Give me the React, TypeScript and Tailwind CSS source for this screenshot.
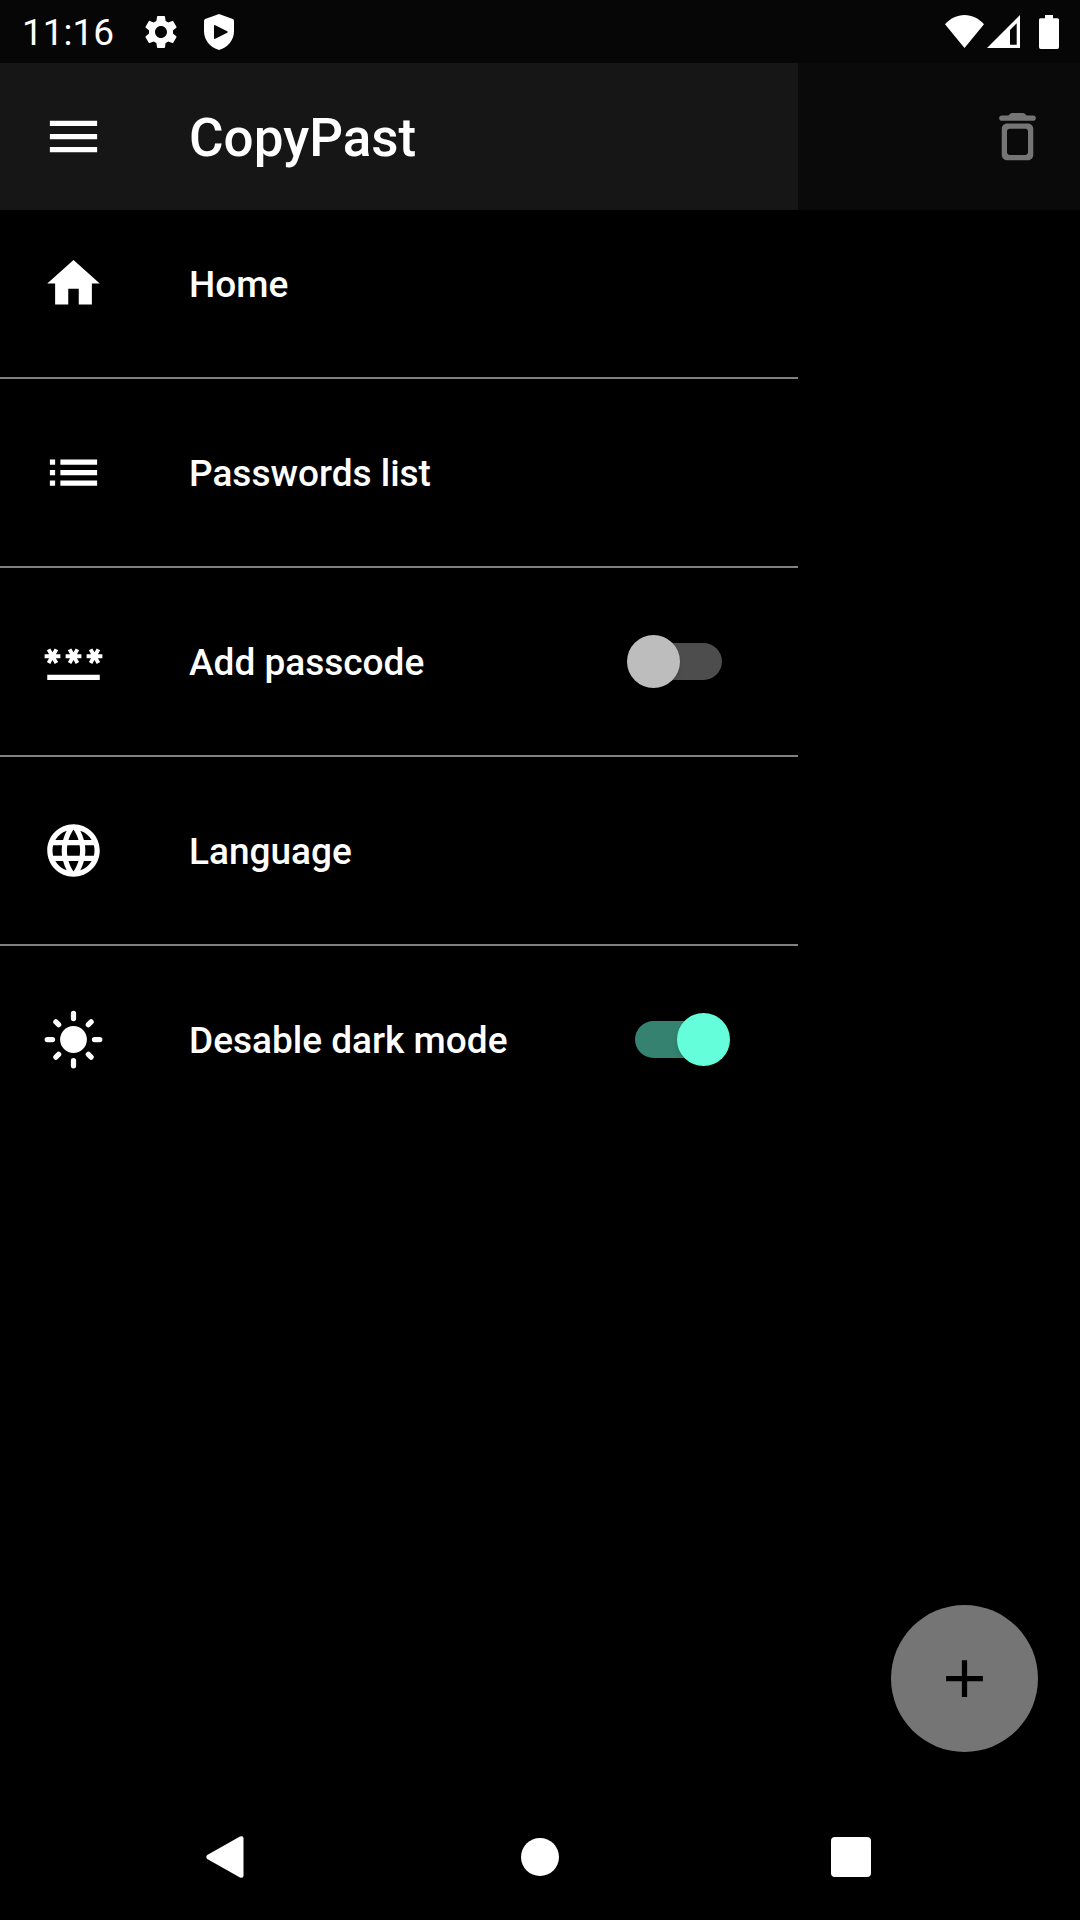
import { useState } from "react";
import type { ReactNode } from "react";
import { MdAdd, MdHome, MdLanguage, MdList, MdMenu, MdPassword, MdSettings } from "react-icons/md";

const ICON = "size-[63px] shrink-0";

function ShieldPlayIcon() {
  return (
    <svg viewBox="0 0 30 36" className="h-9 w-[30px]" fill="currentColor" aria-hidden="true">
      <path d="M15 0 L28.8 5 Q30 5.5 30 6.8 V17 C30 26 24 33.5 15 36 C6 33.5 0 26 0 17 V6.8 Q0 5.5 1.2 5 Z" />
      <path d="M10 11.8 Q10 10.6 11.2 11.2 L23.2 17.3 Q24.4 18 23.2 18.8 L11.2 24.8 Q10 25.4 10 24.2 Z" className="fill-[#060606]" />
    </svg>
  );
}

function WifiIcon() {
  return (
    <svg viewBox="0 0 39 33" className="h-[33px] w-[39px]" fill="currentColor" aria-hidden="true">
      <path d="M19.5 33 L0 9.3 C5 3.6 12 0 19.5 0 S34 3.6 39 9.3 Z" />
    </svg>
  );
}

function SignalIcon() {
  return (
    <svg viewBox="0 0 33 33" className="size-[33px]" fill="currentColor" aria-hidden="true">
      <path fillRule="evenodd" d="M33 0 V33 H0 Z M29.7 8.2 L23 15 V29.7 H29.7 Z" />
    </svg>
  );
}

function BatteryIcon() {
  return (
    <svg viewBox="0 0 20 34" className="h-[34px] w-5" fill="currentColor" aria-hidden="true">
      <path d="M6 0 H14 V3.3 H18.5 Q20 3.3 20 4.8 V32.3 Q20 34 18.3 34 H1.7 Q0 34 0 32.3 V4.8 Q0 3.3 1.5 3.3 H6 Z" />
    </svg>
  );
}

function TrashIcon() {
  return (
    <svg viewBox="0 0 24 24" className={ICON} fill="currentColor" aria-hidden="true">
      <path d="M6 19c0 1.1.9 2 2 2h8c1.1 0 2-.9 2-2V9c0-1.1-.9-2-2-2H8c-1.1 0-2 .9-2 2v10zM9 9h6c.55 0 1 .45 1 1v8c0 .55-.45 1-1 1H9c-.55 0-1-.45-1-1v-8c0-.55.45-1 1-1zm6.5-5l-.71-.71c-.18-.18-.44-.29-.7-.29H9.91c-.26 0-.52.11-.7.29L8.5 4H6c-.55 0-1 .45-1 1s.45 1 1 1h12c.55 0 1-.45 1-1s-.45-1-1-1h-2.5z" />
    </svg>
  );
}

function SunIcon() {
  return (
    <svg viewBox="0 0 24 24" className={ICON} overflow="visible" aria-hidden="true">
      <circle cx="12" cy="12" r="5.1" fill="currentColor" />
      <path
        d="M12 2v2M12 20v2M2 12h2M20 12h2M5.29 5.29l1.06 1.06M17.65 17.65l1.06 1.06M18.71 5.29l-1.06 1.06M6.35 17.65l-1.06 1.06"
        stroke="currentColor"
        strokeWidth="2"
        strokeLinecap="round"
      />
    </svg>
  );
}

function StatusBar() {
  return (
    <header className="flex h-[63px] items-center bg-[#060606] pr-[21px] pl-[22px]">
      <time className="pt-0.5 text-[37px] leading-none">11:16</time>
      <div className="ml-[27px] flex items-center gap-[23px]">
        <MdSettings className="size-10" aria-hidden="true" />
        <ShieldPlayIcon />
      </div>
      <div className="ml-auto flex items-center">
        <WifiIcon />
        <span className="mr-[19px] ml-[3px]">
          <SignalIcon />
        </span>
        <BatteryIcon />
      </div>
    </header>
  );
}

const ROW = "flex h-[147px] w-full items-center gap-[84px] pr-[76px] pl-[42px] text-left text-[37px] font-medium";

function NavRow({ icon, label }: { icon: ReactNode; label: string }) {
  return (
    <a href="#" className={ROW}>
      {icon}
      <span className="pt-0.5">{label}</span>
    </a>
  );
}

function SwitchRow({ icon, label, initial }: { icon: ReactNode; label: string; initial: boolean }) {
  const [on, setOn] = useState(initial);
  return (
    <label className={ROW}>
      {icon}
      <span className="flex-1 pt-0.5">{label}</span>
      <input
        type="checkbox"
        role="switch"
        checked={on}
        onChange={(e) => setOn(e.target.checked)}
        className="flex h-[37px] w-[87px] shrink-0 appearance-none items-center rounded-full bg-[#4d4d4d] before:-ml-2 before:size-[53px] before:shrink-0 before:rounded-full before:bg-[#bdbdbd] before:shadow-md before:content-[''] checked:bg-[#34826f] checked:before:ml-[42px] checked:before:bg-[#64ffda]"
      />
    </label>
  );
}

const DIVIDED = "mb-5 border-b-2 border-[#808080] pb-5";

export default function App() {
  return (
    <div className="flex min-h-screen flex-col bg-black font-['Roboto',sans-serif] text-white">
      <StatusBar />
      <div className="flex flex-1">
        <aside className="w-[798px] max-w-[85%] shrink-0">
          <div className="flex h-[147px] items-center gap-[84px] bg-[#161616] pl-[42px]">
            <button type="button" aria-label="Close menu">
              <MdMenu className={ICON} />
            </button>
            <h1 className="pt-1 text-[53px] font-medium">CopyPast</h1>
          </div>
          <nav>
            <ul>
              <li className={DIVIDED}>
                <NavRow icon={<MdHome className={ICON} />} label="Home" />
              </li>
              <li className={DIVIDED}>
                <NavRow icon={<MdList className={ICON} />} label="Passwords list" />
              </li>
              <li className={DIVIDED}>
                <SwitchRow icon={<MdPassword className={ICON} />} label="Add passcode" initial={false} />
              </li>
              <li className={DIVIDED}>
                <NavRow icon={<MdLanguage className={ICON} />} label="Language" />
              </li>
              <li>
                <SwitchRow icon={<SunIcon />} label="Desable dark mode" initial={true} />
              </li>
            </ul>
          </nav>
        </aside>
        <main className="flex flex-1 flex-col">
          <div className="flex h-[147px] items-center justify-end bg-[#0a0a0a] pr-[31px] text-[#757575]">
            <button type="button" aria-label="Delete all">
              <TrashIcon />
            </button>
          </div>
          <button
            type="button"
            aria-label="Add"
            className="mt-auto mr-[42px] mb-[42px] flex size-[147px] items-center justify-center self-end rounded-full bg-[#757575] text-black"
          >
            <MdAdd className={ICON} />
          </button>
        </main>
      </div>
      <footer className="flex h-[126px] items-center px-[73px]">
        <button type="button" aria-label="Back" className="flex flex-1 justify-center">
          <svg viewBox="0 0 46 42" className="h-[42px] w-[46px]" fill="currentColor" aria-hidden="true">
            <path d="M1.2 19 L34 0.5 Q37.5 -0.8 37.5 2.5 V39.5 Q37.5 42.8 34 41.5 L1.2 23 Q-0.6 21 1.2 19 Z" />
          </svg>
        </button>
        <button type="button" aria-label="Home screen" className="flex flex-1 justify-center">
          <span className="size-[38px] rounded-full bg-white" />
        </button>
        <button type="button" aria-label="Recent apps" className="flex flex-1 justify-center">
          <span className="size-10 rounded-sm bg-white" />
        </button>
      </footer>
    </div>
  );
}
